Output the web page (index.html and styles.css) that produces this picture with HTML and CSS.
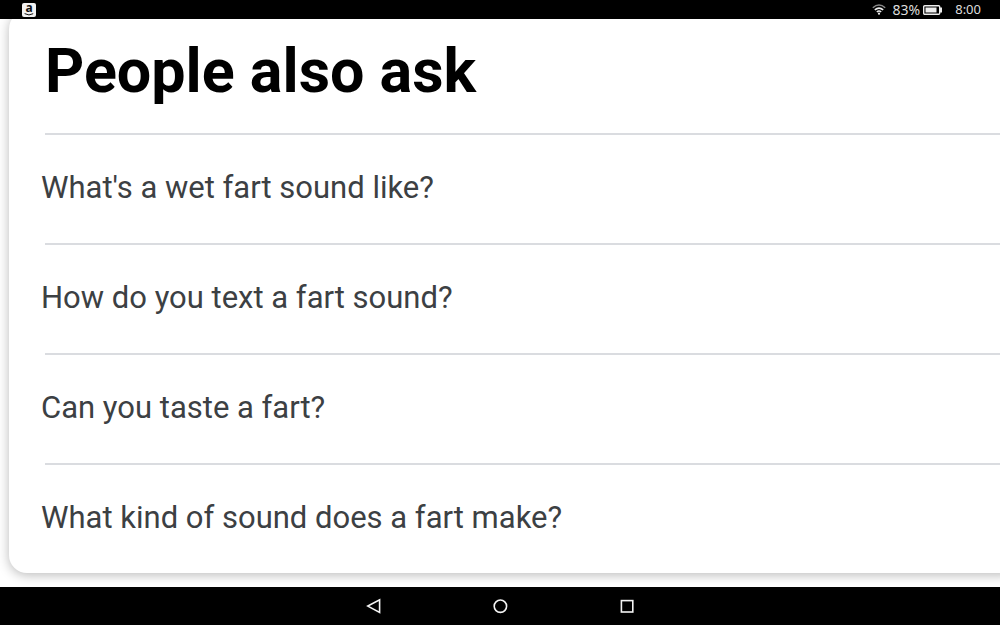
FILE: index.html
```html
<!DOCTYPE html>
<html lang="en">

<head>
    <meta charset="UTF-8">
    <meta name="viewport" content="width=device-width, initial-scale=1.0">
    <title>People also ask</title>
    <link rel="stylesheet" href="styles.css">
</head>

<body>
    <header class="status-bar">
        <svg class="app-icon" viewBox="0 0 14 14" width="14" height="14">
            <rect width="14" height="14" rx="2" fill="#f2f2f2" />
            <text class="app-letter" x="7" y="9" text-anchor="middle">a</text>
            <path d="M2.6 10.6 Q7 13.2 11.2 10.7" fill="none" stroke="#111" stroke-width="1" />
        </svg>
        <div class="status-right">
            <svg class="wifi" viewBox="0 0 14 11" width="14" height="11" fill="none" stroke-width="1.5">
                <path d="M0.8 3.7 Q7 -1.7 13.2 3.7" stroke="#888" />
                <path d="M2.8 5.9 Q7 2.3 11.2 5.9" stroke="#eee" />
                <path d="M4.8 8 Q7 6.2 9.2 8" stroke="#eee" />
                <circle cx="7" cy="9.7" r="1.1" fill="#eee" />
            </svg>
            <span class="battery-level">83%</span>
            <svg class="battery" viewBox="0 0 19 10" width="19" height="10">
                <rect x="0.7" y="0.7" width="16" height="8.6" rx="1" fill="none" stroke="#eee" stroke-width="1.4" />
                <rect x="2.5" y="2.5" width="11" height="5" fill="#eee" />
                <rect x="17" y="2.5" width="2" height="5" fill="#eee" />
            </svg>
            <span class="clock">8:00</span>
        </div>
    </header>
    <main>
        <section class="card">
            <h1>People also ask</h1>
            <ul class="questions">
                <li><button type="button">What's a wet fart sound like?</button></li>
                <li><button type="button">How do you text a fart sound?</button></li>
                <li><button type="button">Can you taste a fart?</button></li>
                <li><button type="button">What kind of sound does a fart make?</button></li>
            </ul>
        </section>
    </main>
    <nav class="nav-bar">
        <button type="button" aria-label="Back">
            <svg viewBox="0 0 16 16" width="16" height="16">
                <path d="M14.6 1.8 V14.4 L2.8 8.1 Z" />
            </svg>
        </button>
        <button type="button" aria-label="Home">
            <svg viewBox="0 0 16 16" width="16" height="16">
                <circle cx="8.4" cy="8.2" r="6.2" />
            </svg>
        </button>
        <button type="button" aria-label="Recent apps">
            <svg viewBox="0 0 16 16" width="16" height="16">
                <rect x="2.4" y="2.6" width="11.4" height="11.4" />
            </svg>
        </button>
    </nav>
</body>

</html>
```

FILE: styles.css
```css
body {
    display: flex;
    flex-direction: column;
    height: 100vh;
    margin: 0;
    background-color: #fff;
    font-family: Roboto, sans-serif;
}

button {
    border: none;
    background: none;
    font-family: inherit;
    cursor: pointer;
}

.status-bar {
    position: relative;
    z-index: 1;
    display: flex;
    justify-content: space-between;
    align-items: center;
    height: 19px;
    padding: 0 19px 0 22px;
    background-color: #000;
    color: #ddd;
    font-family: "Noto Sans", sans-serif;
    font-size: 13px;
    line-height: 19px;
}

.app-icon {
    overflow: visible;
}

.app-letter {
    font-family: "Noto Sans", sans-serif;
    font-size: 12px;
    font-weight: bold;
    fill: #111;
}

.status-right {
    display: flex;
    align-items: center;
}

.battery-level {
    margin: 0 3px 0 7px;
    font-size: 14px;
}

.clock {
    margin-left: 13px;
}

main {
    flex: 1;
    min-height: 0;
    overflow: hidden;
}

/* the card runs up under the status bar and off the right edge */
.card {
    margin: -8px -20px 0 9px;
    padding: 24px 0 0 32px;
    border-radius: 18px;
    background-color: #fff;
    box-shadow: 0 2px 12px rgba(0, 0, 0, 0.28);
}

h1 {
    margin: 0;
    padding: 0 0 26px 4px;
    color: #000;
    font-size: 61px;
    font-weight: bold;
    line-height: 72px;
}

.questions {
    margin: 0;
    padding: 0;
    list-style: none;
}

.questions li::before {
    content: "";
    display: block;
    height: 2px;
    margin-left: 4px;
    background-color: #dadce0;
}

.questions button {
    display: block;
    width: 100%;
    padding: 34px 0 36px;
    color: #3c4043;
    font-size: 31px;
    line-height: 38px;
    text-align: left;
}

.nav-bar {
    display: flex;
    justify-content: center;
    align-items: center;
    gap: 111px;
    height: 38px;
    background-color: #000;
}

.nav-bar button {
    display: flex;
    padding: 0;
}

.nav-bar svg {
    fill: none;
    stroke: #f4f4f4;
    stroke-width: 1.6;
}
```
